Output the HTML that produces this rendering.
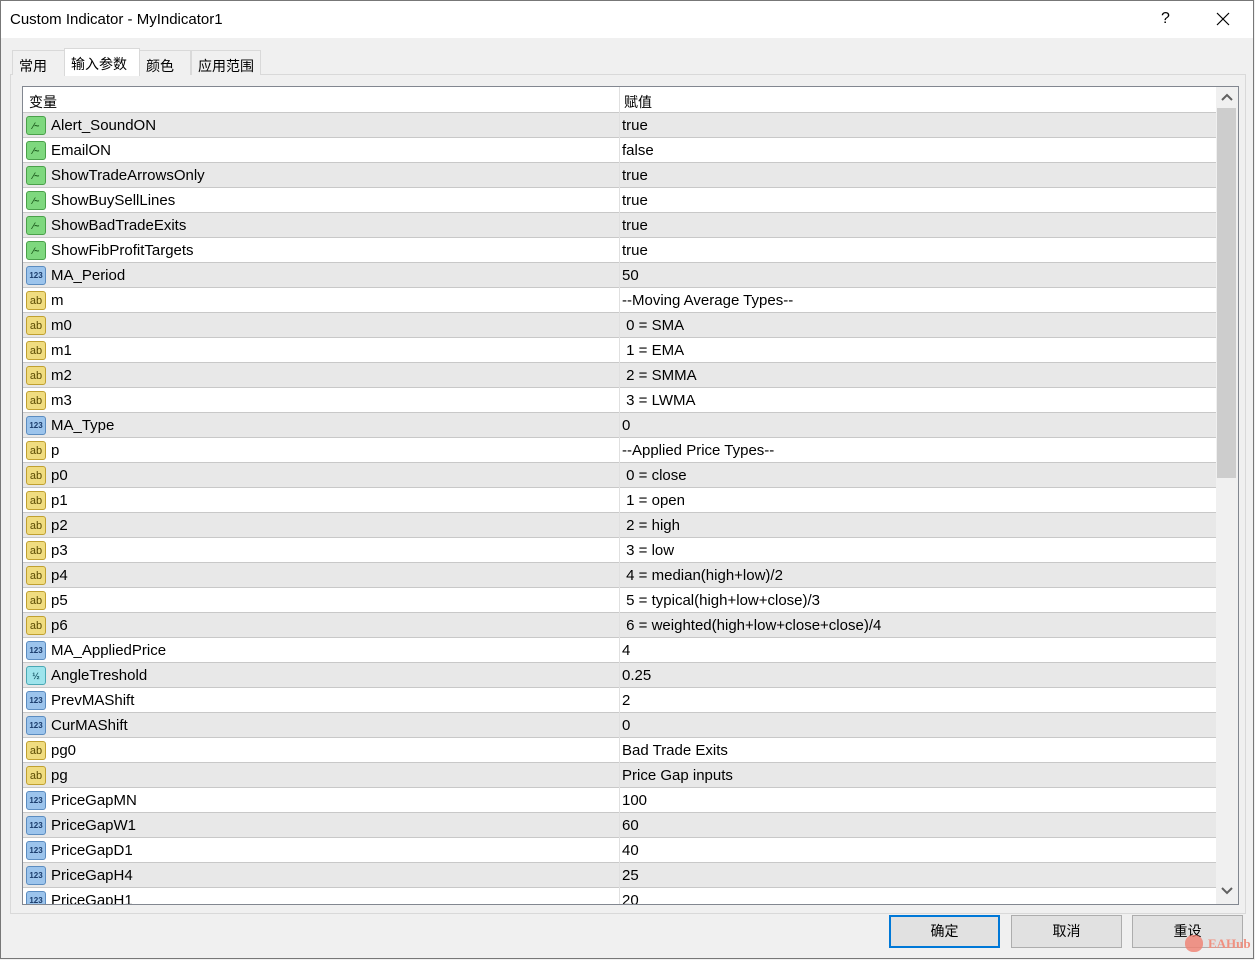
<!DOCTYPE html>
<html><head><meta charset="utf-8"><style>
*{box-sizing:border-box;margin:0;padding:0}
body{width:1255px;height:960px;background:#f0f0f0;font-family:"Liberation Sans","Noto Sans CJK SC",sans-serif;position:relative;overflow:hidden;color:#000}
.win{position:absolute;left:0;top:0;width:1255px;height:960px;background:#f0f0f0}
.frame{position:absolute;left:0;top:0;width:1254px;height:959px;border:1px solid #777}
.title{position:absolute;left:0;top:0;width:1254px;height:38px;background:#fff}
.title .t{position:absolute;left:10px;top:11px;font-size:15px}
.title .q{position:absolute;left:1161px;top:10px;font-size:16px}
.tab{position:absolute;top:50px;height:25px;font-size:14px;padding:5px 0 0 6px;border:1px solid #d9d9d9;border-bottom:none;background:#f0f0f0}
.tab.a{background:#fff;top:48px;height:28px;border-color:#d9d9d9}
.panel{position:absolute;left:10px;top:74px;width:1236px;height:840px;border:1px solid #d9d9d9;background:#f0f0f0}
.list{position:absolute;left:22px;top:86px;width:1217px;height:819px;border:1px solid #828790;background:#fff;overflow:hidden}
.hdr{position:absolute;left:0;top:0;height:26px;width:1193px;background:#fff;border-bottom:1px solid #c8c8c8;font-size:14px}
.row{position:absolute;left:0;width:1193px;height:25px;border-bottom:1px solid #c8c8c8;font-size:15px}
.row.g{background:#e8e8e8}
.n{position:absolute;left:28px;top:4px}
.v{position:absolute;left:599px;top:4px}
.sep{position:absolute;left:596px;top:0;width:1px;height:819px;background:#e0e0e0}
.ic{position:absolute;left:3px;top:3px;width:20px;height:19px;border-radius:3px;font-size:9px;font-weight:bold;text-align:center;line-height:18px;font-family:"Liberation Sans",sans-serif}
.b{background:#7ed87e;border:1px solid #4aa04a;color:#1c5a1c}
.i{background:#9cc4ec;border:1px solid #5b8cc0;color:#1a3c6c;font-size:8px}
.s{background:#f0dc80;border:1px solid #c0a030;color:#5a4a00;font-size:11px;font-weight:normal}
.d{background:#9ee4ec;border:1px solid #4aa8b4;color:#1a5a6a;font-size:9px}
.sb{position:absolute;left:1193px;top:0;width:22px;height:817px;background:#f0f0f0}
.thumb{position:absolute;left:1px;top:21px;width:19px;height:370px;background:#cdcdcd}
.btn{position:absolute;top:915px;width:111px;height:33px;border:1px solid #adadad;background:#e1e1e1;font-size:14px;text-align:center;line-height:31px}
.btn.p{border:2px solid #0078d7;line-height:29px}
</style></head><body>
<div class="win">
<div class="title"><span class="t">Custom Indicator - MyIndicator1</span><span class="q">?</span>
<svg style="position:absolute;left:1216px;top:12px" width="14" height="14"><path d="M1 1L13 13M13 1L1 13" stroke="#000" stroke-width="1.2"/></svg></div>
<div class="panel"></div>
<div class="tab" style="left:12px;width:53px">常用</div>
<div class="tab" style="left:139px;width:52px">颜色</div>
<div class="tab" style="left:191px;width:70px">应用范围</div>
<div class="tab a" style="left:64px;width:76px">输入参数</div>
<div class="list">
<div class="hdr"><span style="position:absolute;left:6px;top:5px">变量</span><span style="position:absolute;left:601px;top:5px">赋值</span></div>
<div class="row g" style="top:26px"><div class="ic b">⁄~</div><span class="n">Alert_SoundON</span><span class="v">true</span></div>
<div class="row" style="top:51px"><div class="ic b">⁄~</div><span class="n">EmailON</span><span class="v">false</span></div>
<div class="row g" style="top:76px"><div class="ic b">⁄~</div><span class="n">ShowTradeArrowsOnly</span><span class="v">true</span></div>
<div class="row" style="top:101px"><div class="ic b">⁄~</div><span class="n">ShowBuySellLines</span><span class="v">true</span></div>
<div class="row g" style="top:126px"><div class="ic b">⁄~</div><span class="n">ShowBadTradeExits</span><span class="v">true</span></div>
<div class="row" style="top:151px"><div class="ic b">⁄~</div><span class="n">ShowFibProfitTargets</span><span class="v">true</span></div>
<div class="row g" style="top:176px"><div class="ic i">123</div><span class="n">MA_Period</span><span class="v">50</span></div>
<div class="row" style="top:201px"><div class="ic s">ab</div><span class="n">m</span><span class="v">--Moving Average Types--</span></div>
<div class="row g" style="top:226px"><div class="ic s">ab</div><span class="n">m0</span><span class="v">&nbsp;0 = SMA</span></div>
<div class="row" style="top:251px"><div class="ic s">ab</div><span class="n">m1</span><span class="v">&nbsp;1 = EMA</span></div>
<div class="row g" style="top:276px"><div class="ic s">ab</div><span class="n">m2</span><span class="v">&nbsp;2 = SMMA</span></div>
<div class="row" style="top:301px"><div class="ic s">ab</div><span class="n">m3</span><span class="v">&nbsp;3 = LWMA</span></div>
<div class="row g" style="top:326px"><div class="ic i">123</div><span class="n">MA_Type</span><span class="v">0</span></div>
<div class="row" style="top:351px"><div class="ic s">ab</div><span class="n">p</span><span class="v">--Applied Price Types--</span></div>
<div class="row g" style="top:376px"><div class="ic s">ab</div><span class="n">p0</span><span class="v">&nbsp;0 = close</span></div>
<div class="row" style="top:401px"><div class="ic s">ab</div><span class="n">p1</span><span class="v">&nbsp;1 = open</span></div>
<div class="row g" style="top:426px"><div class="ic s">ab</div><span class="n">p2</span><span class="v">&nbsp;2 = high</span></div>
<div class="row" style="top:451px"><div class="ic s">ab</div><span class="n">p3</span><span class="v">&nbsp;3 = low</span></div>
<div class="row g" style="top:476px"><div class="ic s">ab</div><span class="n">p4</span><span class="v">&nbsp;4 = median(high+low)/2</span></div>
<div class="row" style="top:501px"><div class="ic s">ab</div><span class="n">p5</span><span class="v">&nbsp;5 = typical(high+low+close)/3</span></div>
<div class="row g" style="top:526px"><div class="ic s">ab</div><span class="n">p6</span><span class="v">&nbsp;6 = weighted(high+low+close+close)/4</span></div>
<div class="row" style="top:551px"><div class="ic i">123</div><span class="n">MA_AppliedPrice</span><span class="v">4</span></div>
<div class="row g" style="top:576px"><div class="ic d">½</div><span class="n">AngleTreshold</span><span class="v">0.25</span></div>
<div class="row" style="top:601px"><div class="ic i">123</div><span class="n">PrevMAShift</span><span class="v">2</span></div>
<div class="row g" style="top:626px"><div class="ic i">123</div><span class="n">CurMAShift</span><span class="v">0</span></div>
<div class="row" style="top:651px"><div class="ic s">ab</div><span class="n">pg0</span><span class="v">Bad Trade Exits</span></div>
<div class="row g" style="top:676px"><div class="ic s">ab</div><span class="n">pg</span><span class="v">Price Gap inputs</span></div>
<div class="row" style="top:701px"><div class="ic i">123</div><span class="n">PriceGapMN</span><span class="v">100</span></div>
<div class="row g" style="top:726px"><div class="ic i">123</div><span class="n">PriceGapW1</span><span class="v">60</span></div>
<div class="row" style="top:751px"><div class="ic i">123</div><span class="n">PriceGapD1</span><span class="v">40</span></div>
<div class="row g" style="top:776px"><div class="ic i">123</div><span class="n">PriceGapH4</span><span class="v">25</span></div>
<div class="row" style="top:801px"><div class="ic i">123</div><span class="n">PriceGapH1</span><span class="v">20</span></div>
<div class="sep"></div>
<div class="sb"><div class="thumb"></div>
<svg style="position:absolute;left:5px;top:6px" width="12" height="8"><path d="M1 7L6 2L11 7" stroke="#606060" stroke-width="2" fill="none"/></svg>
<svg style="position:absolute;left:5px;top:800px" width="12" height="8"><path d="M1 1L6 6L11 1" stroke="#606060" stroke-width="2" fill="none"/></svg></div>
</div>
<div class="btn p" style="left:889px">确定</div>
<div class="btn" style="left:1011px">取消</div>
<div class="btn" style="left:1132px">重设</div>
<div style="position:absolute;left:1185px;top:935px;width:18px;height:17px;border-radius:8px;background:#f08070;opacity:.8"></div>
<div style="position:absolute;left:1208px;top:936px;font-size:13px;font-weight:bold;color:#f09080;font-family:'Liberation Serif',serif">EAHub</div>
<div class="frame"></div>
</div>
</body></html>
